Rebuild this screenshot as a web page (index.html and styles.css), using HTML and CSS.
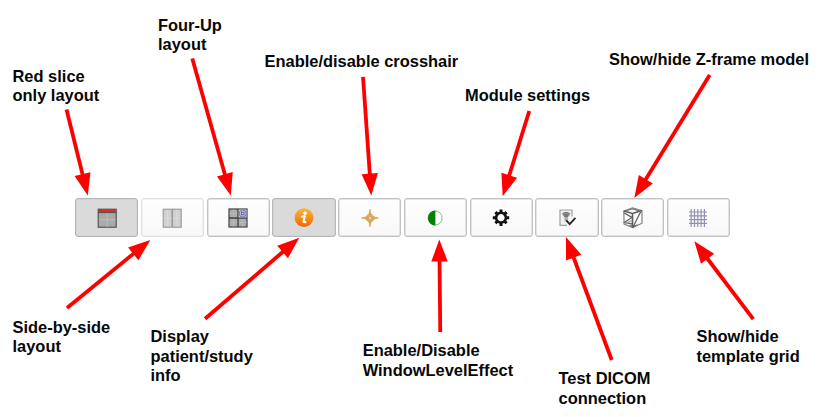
FILE: index.html
```html
<!DOCTYPE html>
<html lang="en">
<head>
<meta charset="utf-8">
<title>Toolbar overview</title>
<link rel="stylesheet" href="styles.css">
</head>
<body>
<main class="diagram">
  <div class="toolbar">
    <button class="tool active" aria-label="Red slice only layout">
      <svg class="icon" viewBox="0 0 20 20"><rect x="1.2" y="1.2" width="18" height="18" fill="#aaa" stroke="#4b4b4b" stroke-width="1.1"/><path d="M10.2 5v14M2 11.7h16.5" stroke="#bcbcba" stroke-width="1"/><rect x="1.7" y="1.6" width="17" height="2.7" fill="#d92c1c"/><path d="M1 4.6h18.4" stroke="#554848" stroke-width="1"/></svg>
    </button>
    <button class="tool disabled" aria-label="Side-by-side layout">
      <svg class="icon" viewBox="0 0 20 20"><rect x="1.2" y="1.2" width="18" height="18" fill="#d0d0d0" stroke="#999" stroke-width="1.1"/><path d="M5.7 2v16M14.8 2v16M2 10.2h16" stroke="#dcdcdc"/><path d="M10.2 1v18" stroke="#8c8c8c" stroke-width="1.2"/></svg>
    </button>
    <button class="tool" aria-label="Four-Up layout">
      <svg class="icon" viewBox="0 0 20 20"><rect x="1" y="1" width="18" height="18" fill="#acacac" stroke="#4c4c4c" stroke-width="1.3"/><path d="M5.5 1.5v17M14.5 1.5v17M1.5 5.5h17M1.5 14.5h17" stroke="#bababa" stroke-width=".8"/><path d="M10 1v18M1 10h18" stroke="#404040" stroke-width="1.3"/><rect x="10.7" y="1.6" width="7.8" height="7.8" fill="#c3c3df"/><circle cx="14.7" cy="5.5" r="3.5" fill="none" stroke="#7777b5" stroke-width="1"/><rect x="13.4" y="4.2" width="2.6" height="2.6" fill="#ddddf2" stroke="#55559b" stroke-width=".9"/></svg>
    </button>
    <button class="tool active" aria-label="Display patient/study info">
      <svg class="icon" viewBox="0 0 20 20"><defs><linearGradient id="orange" x1="0" y1="0" x2="0" y2="1"><stop offset="0" stop-color="#f9b63c"/><stop offset=".55" stop-color="#f58c19"/><stop offset="1" stop-color="#ec6507"/></linearGradient></defs><circle cx="10" cy="9.7" r="9.4" fill="url(#orange)"/><circle cx="11" cy="5.2" r="1.8" fill="#fff"/><path d="M7.3 9.2Q9 8 10.9 8.2L9.5 13.4Q9.3 15.2 12.2 13.6" fill="none" stroke="#fff" stroke-width="2" stroke-linejoin="round"/></svg>
    </button>
    <button class="tool" aria-label="Enable/disable crosshair">
      <svg class="icon" viewBox="0 0 20 20"><path d="M10 1.3L11.3 7.2 13.2 8.7 18.5 10 13.2 11.3 11.3 12.8 10 18.7 8.7 12.8 6.8 11.3 1.5 10 6.8 8.7 8.7 7.2Z" fill="#dba65a" stroke="#dba65a" stroke-width=".8"/><circle cx="10" cy="10" r="3.7" fill="none" stroke="#d99f4e" stroke-width="1.1"/><circle cx="10" cy="10" r="1.2" fill="#f0d2a0"/></svg>
    </button>
    <button class="tool" aria-label="Enable/Disable WindowLevelEffect">
      <svg class="icon" viewBox="0 0 20 20"><circle cx="10.1" cy="10" r="7" fill="#fff" stroke="#88bf88" stroke-width="1"/><path d="M10.4 2.5A7.5 7.5 0 0 0 10.4 17.5Z" fill="#088008"/></svg>
    </button>
    <button class="tool" aria-label="Module settings">
      <svg class="icon" viewBox="0 0 20 20"><g transform="translate(10 9.7)"><path d="M0-8.2V8.2M-8.2 0H8.2M-5.6-5.6L5.6 5.6M-5.6 5.6L5.6-5.6" stroke="#111" stroke-width="3"/><circle r="4.9" fill="#fff" stroke="#111" stroke-width="2.6"/></g></svg>
    </button>
    <button class="tool" aria-label="Test DICOM connection">
      <svg class="icon" viewBox="0 0 20 20"><path d="M15 8.5V2H3v15.3h7" fill="#f1f1f1" stroke="#a0a0a0" stroke-width="1.2"/><path d="M5 5.6Q9 1.9 13.3 5.6L10.7 9.5H7.7Z" fill="#777"/><path d="M7.5 9h3.3v4.3H7.5Z" fill="#aaa"/><path d="M6 6.4Q9 4.2 12.4 6.4" fill="none" stroke="#aaa" stroke-width=".6"/><path d="M9.3 12.3l3.4 3.8 5.7-6.3" fill="none" stroke="#292929" stroke-width="1.9"/></svg>
    </button>
    <button class="tool" aria-label="Show/hide Z-frame model">
      <svg class="icon" viewBox="0 0 20 20"><g fill="none" stroke="#5c5c5c" stroke-width="1.2"><path d="M.8 3L9.5 0 19 2.6V15.2L10 19.5 1.1 16Z" stroke="#858585"/><path d="M.8 3L9.5 5.5 19 2.6M9.5 5.5V19.5" stroke-width="1.6"/><path d="M1.1 5L9 9.4 1.4 14.4 9.7 16.2M17.7 3.8L10.5 18"/><path d="M3 3L9.5.8l6.8 2" stroke="#777"/><path d="M1.2 15.8L9 12.6" stroke="#aaa"/></g><path d="M5.5 16.8l4.5 1 5.3-1.8L10 19.6Z" fill="#595959"/></svg>
    </button>
    <button class="tool" aria-label="Show/hide template grid">
      <svg class="icon" viewBox="0 0 20 20"><path d="M3.2 1v18M6.5 1v18M9.8 1v18M13.1 1v18M16.4 1v18M1 4h18M1 7.8h18M1 11.6h18M1 15.4h18" stroke="#9090b4" stroke-width="1.2"/></svg>
    </button>
  </div>

  <svg class="arrows" viewBox="0 0 820 417" aria-hidden="true">
    <defs><path id="head" d="M0 0L-22-8.2V8.2Z"/></defs>
    <g transform="translate(87.8 195.5) rotate(76.1)"><path d="M-88.6 0H-20"/><use href="#head"/></g>
    <g transform="translate(230.8 195.5) rotate(74.3)"><path d="M-142.3 0H-20"/><use href="#head"/></g>
    <g transform="translate(371.3 195.5) rotate(86)"><path d="M-118.8 0H-20"/><use href="#head"/></g>
    <g transform="translate(502.7 196.3) rotate(107.3)"><path d="M-89.4 0H-20"/><use href="#head"/></g>
    <g transform="translate(634.3 198) rotate(121.5)"><path d="M-144.3 0H-20"/><use href="#head"/></g>
    <g transform="translate(150.3 240) rotate(-39.2)"><path d="M-107.5 0H-20"/><use href="#head"/></g>
    <g transform="translate(299.3 237.7) rotate(-40.7)"><path d="M-124.3 0H-20"/><use href="#head"/></g>
    <g transform="translate(439.3 239.5) rotate(-90.6)"><path d="M-92.5 0H-20"/><use href="#head"/></g>
    <g transform="translate(566 237) rotate(-110.4)"><path d="M-131.2 0H-20"/><use href="#head"/></g>
    <g transform="translate(694.3 241.3) rotate(-127.2)"><path d="M-97.6 0H-20"/><use href="#head"/></g>
  </svg>

  <div class="label red-slice">Red slice<br>only layout</div>
  <div class="label four-up">Four-Up<br>layout</div>
  <div class="label crosshair">Enable/disable crosshair</div>
  <div class="label settings">Module settings</div>
  <div class="label z-frame">Show/hide Z-frame model</div>
  <div class="label side">Side-by-side<br>layout</div>
  <div class="label info">Display<br>patient/study<br>info</div>
  <div class="label window-level">Enable/Disable<br>WindowLevelEffect</div>
  <div class="label dicom">Test DICOM<br>connection</div>
  <div class="label grid">Show/hide<br>template grid</div>
</main>
</body>
</html>
```
FILE: styles.css
```css
* { box-sizing: border-box; }

body {
  margin: 0;
  background: #fff;
}

.diagram {
  position: relative;
  width: 820px;
  height: 417px;
  padding: 198px 90px 0 75px;
  overflow: hidden;
}

.toolbar {
  display: grid;
  grid-template-columns: repeat(10, 1fr);
  gap: 2.5px;
  height: 39px;
}

.tool {
  display: flex;
  align-items: center;
  justify-content: center;
  padding: 0;
  border: 1.5px solid #c2c2c2;
  border-radius: 3px;
  background: linear-gradient(#fefefe, #f8f8f8);
  box-shadow: inset 0 0 0 .5px #ccc;
}

.tool.active {
  border-color: #b6b6b6;
  background: #dadada;
}

.tool.disabled {
  border-color: #e0e0e0;
  box-shadow: inset 0 0 0 .5px #e8e8e8;
}

.icon {
  width: 20px;
  height: 20px;
  overflow: visible;
}

.arrows {
  position: absolute;
  inset: 0;
  width: 820px;
  height: 417px;
  fill: #f00;
  stroke: none;
}

.arrows g > path {
  stroke: #f00;
  stroke-width: 3.8px;
}

.label {
  position: absolute;
  font: bold 16.45px/19.4px "Liberation Sans", Arial, sans-serif;
  color: #080808;
  white-space: nowrap;
}

.red-slice { left: 12.5px; top: 67px; }
.four-up { left: 158px; top: 16px; }
.crosshair { left: 264.5px; top: 52px; }
.settings { left: 465px; top: 86px; }
.z-frame { left: 609px; top: 50px; }
.side { left: 12.5px; top: 318px; }
.info { left: 150.5px; top: 327.4px; }
.window-level { left: 362.7px; top: 341.4px; }
.dicom { left: 558.5px; top: 369.4px; }
.grid { left: 696.5px; top: 327.4px; }
```
